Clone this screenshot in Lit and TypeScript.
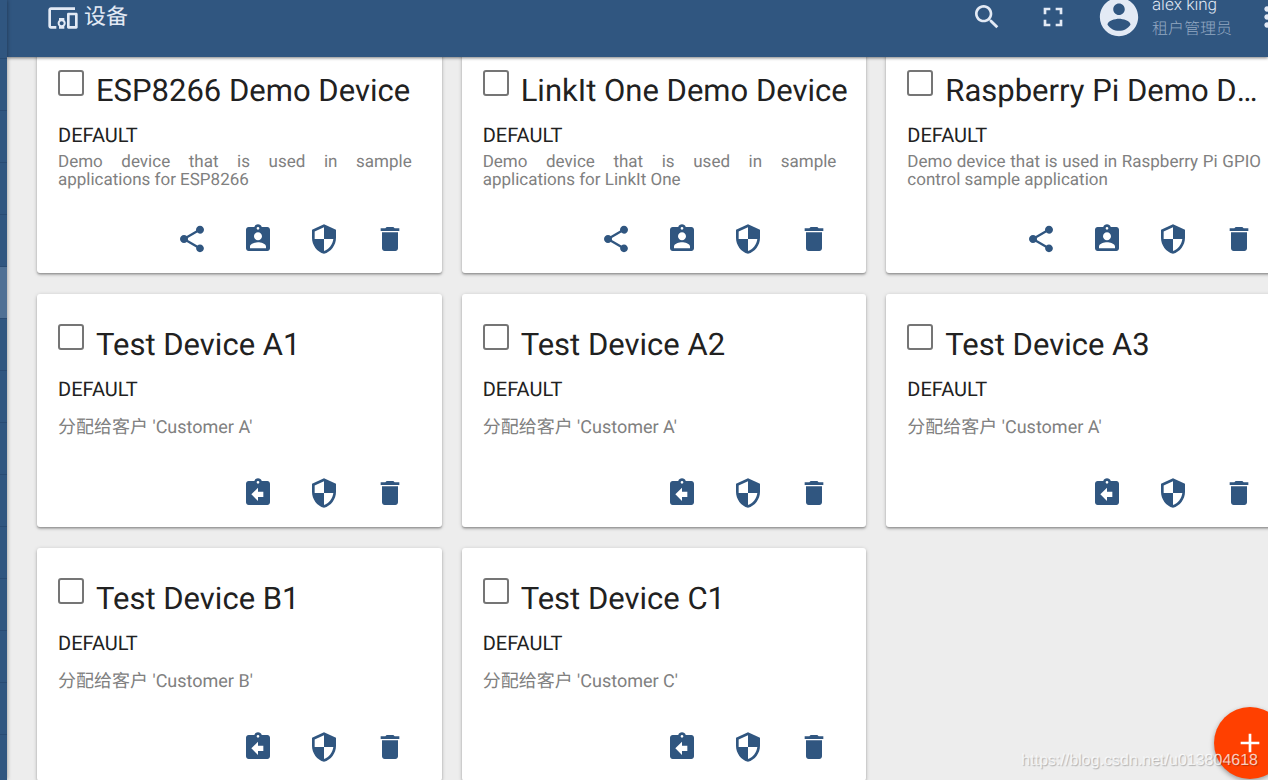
import { LitElement, html, css, svg } from "lit";
import { customElement, property } from "lit/decorators.js";

const ICONS: Record<string, string> = {
  devices:
    "M3 6h18V4H3c-1.1 0-2 .9-2 2v12c0 1.1.9 2 2 2h4v-2H3V6zm10 6H9v1.78c-.61.55-1 1.33-1 2.22s.39 1.67 1 2.22V20h4v-1.78c.61-.55 1-1.34 1-2.22s-.39-1.67-1-2.22V12zm-2 5.5c-.83 0-1.5-.67-1.5-1.5s.67-1.5 1.5-1.5 1.5.67 1.5 1.5-.67 1.5-1.5 1.5zM22 8h-6c-.5 0-1 .5-1 1v10c0 .5.5 1 1 1h6c.5 0 1-.5 1-1V9c0-.5-.5-1-1-1zm-1 10h-4v-8h4v8z",
  search:
    "M15.5 14h-.79l-.28-.27C15.41 12.59 16 11.11 16 9.5 16 5.91 13.09 3 9.5 3S3 5.91 3 9.5 5.91 16 9.5 16c1.61 0 3.09-.59 4.23-1.57l.27.28v.79l5 4.99L20.49 19l-4.99-5zm-6 0C7.01 14 5 11.99 5 9.5S7.01 5 9.5 5 14 7.01 14 9.5 11.99 14 9.5 14z",
  fullscreen:
    "M7 14H5v5h5v-2H7v-3zm-2-4h2V7h3V5H5v5zm12 7h-3v2h5v-5h-2v3zM14 5v2h3v3h2V5h-5z",
  account:
    "M12 2C6.48 2 2 6.48 2 12s4.48 10 10 10 10-4.48 10-10S17.52 2 12 2zm0 3c1.66 0 3 1.34 3 3s-1.34 3-3 3-3-1.34-3-3 1.34-3 3-3zm0 14.2c-2.5 0-4.71-1.28-6-3.22.03-1.99 4-3.08 6-3.08 1.99 0 5.97 1.09 6 3.08-1.29 1.94-3.5 3.22-6 3.22z",
  more: "M12 8c1.1 0 2-.9 2-2s-.9-2-2-2-2 .9-2 2 .9 2 2 2zm0 2c-1.1 0-2 .9-2 2s.9 2 2 2 2-.9 2-2-.9-2-2-2zm0 6c-1.1 0-2 .9-2 2s.9 2 2 2 2-.9 2-2-.9-2-2-2z",
  share:
    "M18 16.08c-.76 0-1.44.3-1.96.77L8.91 12.7c.05-.23.09-.46.09-.7s-.04-.47-.09-.7l7.05-4.11c.54.5 1.25.81 2.04.81 1.66 0 3-1.34 3-3s-1.34-3-3-3-3 1.34-3 3c0 .24.04.47.09.7L8.04 9.81C7.5 9.31 6.79 9 6 9c-1.66 0-3 1.34-3 3s1.34 3 3 3c.79 0 1.5-.31 2.04-.81l7.12 4.16c-.05.21-.08.43-.08.65 0 1.61 1.31 2.92 2.92 2.92 1.61 0 2.92-1.31 2.92-2.92s-1.31-2.92-2.92-2.92z",
  assign:
    "M19 3h-4.18C14.4 1.84 13.3 1 12 1c-1.3 0-2.4.84-2.82 2H5c-1.1 0-2 .9-2 2v14c0 1.1.9 2 2 2h14c1.1 0 2-.9 2-2V5c0-1.1-.9-2-2-2zm-7 0c.55 0 1 .45 1 1s-.45 1-1 1-1-.45-1-1 .45-1 1-1zm0 4c1.66 0 3 1.34 3 3s-1.34 3-3 3-3-1.34-3-3 1.34-3 3-3zm6 12H6v-1.4c0-2 4-3.1 6-3.1s6 1.1 6 3.1V19z",
  unassign:
    "M19 3h-4.18C14.4 1.84 13.3 1 12 1c-1.3 0-2.4.84-2.82 2H5c-1.1 0-2 .9-2 2v14c0 1.1.9 2 2 2h14c1.1 0 2-.9 2-2V5c0-1.1-.9-2-2-2zm-7 0c.55 0 1 .45 1 1s-.45 1-1 1-1-.45-1-1 .45-1 1-1zm4 12h-4v3l-5-5 5-5v3h4v4z",
  security:
    "M12 1L3 5v6c0 5.55 3.84 10.74 9 12 5.16-1.26 9-6.45 9-12V5l-9-4zm0 10.99h7c-.53 4.12-3.28 7.79-7 8.94V12H5V6.3l7-3.19v8.88z",
  remove: "M6 19c0 1.1.9 2 2 2h8c1.1 0 2-.9 2-2V7H6v12zM19 4h-3.5l-1-1h-5l-1 1H5v2h14V4z",
  add: "M19 13h-6v6h-2v-6H5v-2h6V5h2v6h6v2z",
};

const icon = (name: string) =>
  html`<svg class="icon" viewBox="0 0 24 24" aria-hidden="true">${svg`<path d=${ICONS[name]}></path>`}</svg>`;

interface Device {
  name: string;
  type: string;
  description?: string;
  customer?: string;
}

const DEVICES: Device[] = [
  { name: "ESP8266 Demo Device", type: "DEFAULT", description: "Demo device that is used in sample applications for ESP8266" },
  { name: "LinkIt One Demo Device", type: "DEFAULT", description: "Demo device that is used in sample applications for LinkIt One" },
  { name: "Raspberry Pi Demo Device", type: "DEFAULT", description: "Demo device that is used in Raspberry Pi GPIO control sample application" },
  { name: "Test Device A1", type: "DEFAULT", customer: "Customer A" },
  { name: "Test Device A2", type: "DEFAULT", customer: "Customer A" },
  { name: "Test Device A3", type: "DEFAULT", customer: "Customer A" },
  { name: "Test Device B1", type: "DEFAULT", customer: "Customer B" },
  { name: "Test Device C1", type: "DEFAULT", customer: "Customer C" },
];

const shared = css`
  * {
    box-sizing: border-box;
  }
  button {
    display: grid;
    place-items: center;
    flex: none;
    padding: 0;
    border: 0;
    background: none;
    color: inherit;
    cursor: pointer;
  }
  .icon {
    display: block;
    width: 32px;
    height: 32px;
    fill: currentColor;
  }
`;

@customElement("device-card")
export class DeviceCard extends LitElement {
  static styles = [
    shared,
    css`
      :host {
        display: flex;
        flex-direction: column;
        min-width: 0;
        min-height: 233px;
        padding: 30px 18px 18px 21px;
        box-sizing: border-box;
        border-radius: 3px;
        background: #fff;
        box-shadow: 0 1px 4px rgba(0, 0, 0, 0.2), 0 2px 2px rgba(0, 0, 0, 0.16),
          0 1px 1px rgba(0, 0, 0, 0.12);
      }
      .head {
        display: flex;
        align-items: flex-start;
        gap: 12px;
      }
      .check {
        appearance: none;
        flex: none;
        width: 26px;
        height: 26px;
        margin: 0;
        border: 2px solid #757575;
        border-radius: 3px;
      }
      .check:checked {
        background: #305680;
      }
      .name {
        flex: 1;
        min-width: 0;
        padding-top: 3px;
        overflow: hidden;
        white-space: nowrap;
        text-overflow: ellipsis;
        font-size: 31px;
        line-height: 36px;
      }
      .type {
        padding-top: 13px;
        font-size: 20px;
        line-height: 26px;
      }
      .info {
        padding: 5px 12px 0 0;
        color: #808080;
        font-size: 17px;
        line-height: 18px;
        text-align: justify;
      }
      .customer {
        padding-top: 15px;
        color: #808080;
        font-size: 18px;
        line-height: 22px;
      }
      .actions {
        display: flex;
        justify-content: flex-end;
        gap: 34px;
        margin-top: auto;
        padding-right: 18px;
        color: #305680;
      }
    `,
  ];

  @property({ attribute: false }) device!: Device;

  render() {
    const d = this.device;
    return html`
      <div class="head">
        <input class="check" id="pick" type="checkbox" />
        <label class="name" for="pick">${d.name}</label>
      </div>
      <div class="type">${d.type}</div>
      ${d.customer
        ? html`<div class="customer">分配给客户 '${d.customer}'</div>`
        : html`<div class="info">${d.description}</div>`}
      <div class="actions">
        ${d.customer
          ? html`<button aria-label="取消分配">${icon("unassign")}</button>`
          : html`<button aria-label="分享">${icon("share")}</button>
              <button aria-label="分配给客户">${icon("assign")}</button>`}
        <button aria-label="管理凭据">${icon("security")}</button>
        <button aria-label="删除">${icon("remove")}</button>
      </div>
    `;
  }
}

@customElement("app-root")
export class AppRoot extends LitElement {
  static styles = [
    shared,
    css`
      :host {
        position: relative;
        display: flex;
        height: 100vh;
        overflow: hidden;
        background: #ededed;
        color: #212121;
        font-family: Roboto, "Noto Sans CJK SC", sans-serif;
        text-rendering: geometricPrecision;
      }
      .side {
        position: relative;
        z-index: 3;
        flex: none;
        width: 7px;
        padding-top: 7px;
        background: #305680;
        box-shadow: 0 0 4px rgba(0, 0, 0, 0.4);
      }
      .entry {
        height: 52px;
        border-bottom: 1px solid #294b73;
      }
      .entry.active {
        background: #4f7095;
      }
      .main {
        display: flex;
        flex-direction: column;
        flex: 1;
        min-width: 0;
      }
      .bar {
        position: relative;
        z-index: 2;
        display: flex;
        align-items: flex-start;
        height: 57px;
        flex: none;
        padding-left: 40px;
        background: #305680;
        color: #e3eaf5;
        box-shadow: 0 1px 3px rgba(0, 0, 0, 0.5);
      }
      .title,
      .tools {
        display: flex;
        align-items: center;
      }
      .title {
        flex: 1;
        gap: 5px;
        height: 36px;
        margin: 0;
        font-size: 22px;
        font-weight: 400;
      }
      .title span {
        padding-bottom: 6px;
      }
      .tools {
        flex: none;
        gap: 34px;
        height: 33px;
        margin-right: -15px;
      }
      .user {
        display: flex;
        align-items: center;
        gap: 10px;
        margin: 0 -15px 0 -7px;
      }
      .user .icon {
        width: 46px;
        height: 46px;
      }
      .who {
        font-size: 17px;
        line-height: 23px;
        font-weight: 300;
      }
      .role {
        color: #93a8c2;
        font-size: 16px;
      }
      .view {
        flex: 1;
        min-height: 0;
        overflow: hidden;
      }
      .cards {
        display: grid;
        grid-template-columns: repeat(3, minmax(0, 1fr));
        gap: 21px 20px;
        margin: -17px -23px 0 30px;
      }
      .fab {
        position: absolute;
        z-index: 4;
        right: -18px;
        bottom: 1px;
        width: 72px;
        height: 72px;
        border-radius: 50%;
        background: #ff4000;
        color: #fff;
        box-shadow: 0 2px 5px rgba(0, 0, 0, 0.35);
      }
      .mark {
        position: absolute;
        z-index: 5;
        right: 10px;
        bottom: 9px;
        color: rgba(255, 255, 255, 0.75);
        font: 16px/20px "Liberation Sans", sans-serif;
        text-shadow: 1px 1px 1px rgba(0, 0, 0, 0.25);
      }
    `,
  ];

  render() {
    return html`
      <nav class="side">
        ${Array.from({ length: 14 }, (_, i) => html`<div class=${i === 5 ? "entry active" : "entry"}></div>`)}
      </nav>
      <div class="main">
        <header class="bar">
          <h1 class="title">${icon("devices")}<span>设备</span></h1>
          <div class="tools">
            <button aria-label="搜索">${icon("search")}</button>
            <button aria-label="全屏">${icon("fullscreen")}</button>
            <div class="user">
              ${icon("account")}
              <div class="who">
                <div>alex king</div>
                <div class="role">租户管理员</div>
              </div>
            </div>
            <button aria-label="更多">${icon("more")}</button>
          </div>
        </header>
        <main class="view">
          <div class="cards">
            ${DEVICES.map((d) => html`<device-card .device=${d}></device-card>`)}
          </div>
        </main>
      </div>
      <button class="fab" aria-label="添加设备">${icon("add")}</button>
      <div class="mark">https://blog.csdn.net/u013804618</div>
    `;
  }
}
